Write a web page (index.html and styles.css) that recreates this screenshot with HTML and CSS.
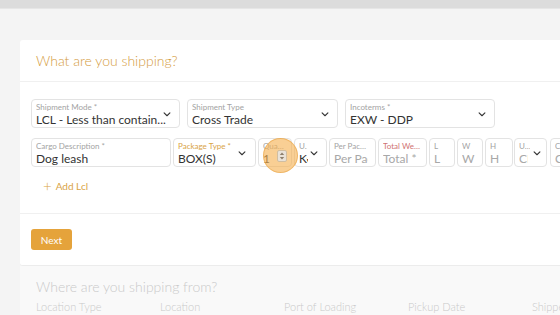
FILE: index.html
```html
<!DOCTYPE html>
<html lang="en">
<head>
<meta charset="utf-8">
<title>New Shipment</title>
<link rel="stylesheet" href="styles.css">
</head>
<body>
<div class="topbar"></div>
<main class="page">
  <section class="card">
    <header class="card-head">What are you shipping?</header>
    <div class="card-body">
      <div class="row row-main">
        <div class="field w-mode">
          <span class="lbl">Shipment Mode *</span>
          <span class="val">LCL - Less than contain...</span>
          <svg class="chev" viewBox="0 0 9 6"><path d="M1 1l3.5 3.5L8 1"/></svg>
        </div>
        <div class="field w-type">
          <span class="lbl">Shipment Type</span>
          <span class="val">Cross Trade</span>
          <svg class="chev" viewBox="0 0 9 6"><path d="M1 1l3.5 3.5L8 1"/></svg>
        </div>
        <div class="field w-inco">
          <span class="lbl">Incoterms *</span>
          <span class="val">EXW - DDP</span>
          <svg class="chev" viewBox="0 0 9 6"><path d="M1 1l3.5 3.5L8 1"/></svg>
        </div>
      </div>
      <div class="row row-items">
        <div class="field w-cargo">
          <span class="lbl">Cargo Description *</span>
          <span class="val">Dog leash</span>
        </div>
        <div class="field w-pkg">
          <span class="lbl lbl-focus">Package Type *</span>
          <span class="val">BOX(S)</span>
          <svg class="chev" viewBox="0 0 9 6"><path d="M1 1l3.5 3.5L8 1"/></svg>
        </div>
        <div class="field w-qty">
          <span class="lbl">Quantity *</span>
          <span class="val">1</span>
          <span class="spin">
            <svg viewBox="0 0 10 12"><rect x="0.5" y="0.5" width="9" height="11" rx="1.5"/><path class="tri" d="M5 2.5l2.2 2.6H2.8zM5 9.5L2.8 6.9h4.4z"/></svg>
          </span>
          <span class="pointer"></span>
        </div>
        <div class="field w-unit">
          <span class="lbl">Unit</span>
          <span class="val">KG</span>
          <svg class="chev" viewBox="0 0 9 6"><path d="M1 1l3.5 3.5L8 1"/></svg>
        </div>
        <div class="field w-per">
          <span class="lbl">Per Package Weight</span>
          <span class="val ph">Per Package</span>
        </div>
        <div class="field w-total">
          <span class="lbl lbl-error">Total Weight *</span>
          <span class="val ph">Total *</span>
        </div>
        <div class="field w-l">
          <span class="lbl">L</span>
          <span class="val ph">L</span>
        </div>
        <div class="field w-w">
          <span class="lbl">W</span>
          <span class="val ph">W</span>
        </div>
        <div class="field w-h">
          <span class="lbl">H</span>
          <span class="val ph">H</span>
        </div>
        <div class="field w-u">
          <span class="lbl">Unit</span>
          <span class="val ph">CM</span>
          <svg class="chev" viewBox="0 0 9 6"><path d="M1 1l3.5 3.5L8 1"/></svg>
        </div>
        <div class="field w-c">
          <span class="lbl">CBM</span>
          <span class="val ph">CBM</span>
        </div>
      </div>
      <button class="add" type="button"><span class="plus">+</span>Add Lcl</button>
    </div>
    <footer class="card-foot">
      <button class="btn" type="button">Next</button>
    </footer>
  </section>

  <section class="card-next">
    <h2 class="next-title">Where are you shipping from?</h2>
    <div class="next-cols">
      <span>Location Type</span>
      <span>Location</span>
      <span>Port of Loading</span>
      <span>Pickup Date</span>
      <span>Shipper</span>
    </div>
  </section>
</main>
</body>
</html>
```

FILE: styles.css
```css
* { box-sizing: border-box; }

html, body {
  margin: 0;
  height: 100%;
  overflow: hidden;
}

body {
  background: #f4f4f4;
  font-family: Lato, "Liberation Sans", sans-serif;
  color: #333;
}

.topbar {
  height: 9px;
  background: #dcdcdc;
  border-bottom: 1px solid #e6e6e6;
}

.page {
  padding: 31px 0 0 20px;
}

/* first step card */
.card {
  background: #fff;
  border-radius: 3px 0 0 3px;
  border-bottom: 1px solid #ececec;
}

.card-head {
  height: 42px;
  display: flex;
  align-items: center;
  padding-left: 16px;
  font-size: 14px;
  font-weight: 300;
  color: #d49b3c;
  border-bottom: 1px solid #f0f0f0;
}

.card-body {
  padding: 17px 0 19px 11px;
  border-bottom: 1px solid #f0f0f0;
  white-space: nowrap;
}

.row {
  display: flex;
}

.row-main { gap: 7px; }

.row-items {
  gap: 2px;
  margin-top: 10px;
}

.field {
  position: relative;
  flex: none;
  height: 29px;
  border: 1px solid #e3e3e3;
  border-radius: 4px;
  padding: 2px 4px 0;
  overflow: hidden;
  display: flex;
  flex-direction: column;
}

.lbl {
  font-size: 8px;
  line-height: 10px;
  color: #a3a3a3;
  overflow: hidden;
  text-overflow: ellipsis;
  white-space: nowrap;
  padding-right: 2px;
}

.lbl-focus { color: #d9a346; }
.lbl-error { color: #d07272; }

.val {
  font-size: 12px;
  line-height: 15px;
  color: #333;
  overflow: hidden;
  white-space: nowrap;
  margin-right: 3px;
}

.val.ph { color: #a8a8a8; }

.chev {
  position: absolute;
  right: 8px;
  top: 12px;
  width: 8px;
  height: 5px;
  fill: none;
  stroke: #333;
  stroke-width: 1.3;
  stroke-linecap: round;
  stroke-linejoin: round;
  background: #fff;
  box-shadow: 0 0 0 3px #fff;
}

.w-mode  { width: 149px; }
.w-type  { width: 151px; }
.w-inco  { width: 150px; }

.w-cargo { width: 140px; }
.w-pkg   { width: 83px; }
.w-qty   { width: 34px; }
.w-unit  { width: 33px; }
.w-per   { width: 47px; }
.w-total { width: 49px; }
.w-l     { width: 26px; }
.w-w     { width: 26px; }
.w-h     { width: 28px; }
.w-u     { width: 33px; margin-left: -1px; }
.w-c     { width: 40px; margin-left: 1px; }

.w-pkg .chev { right: 9px; }
.w-unit .chev { right: 8px; }
.w-u .chev { right: 5px; }

.w-unit .lbl,
.w-u .lbl { max-width: 14px; }

.w-unit .val,
.w-u .val { max-width: 9px; }

/* number stepper inside the quantity box */
.spin {
  position: absolute;
  left: 18px;
  top: 11px;
  width: 10px;
  height: 12px;
  z-index: 2;
}

.spin svg {
  width: 10px;
  height: 12px;
  display: block;
}

.spin rect {
  fill: #e9e2d8;
  stroke: #c9b89c;
  stroke-width: 0.8;
}

.spin .tri { fill: #8d7f6c; }

/* click highlight over the stepper */
.pointer {
  position: absolute;
  left: 4px;
  top: -1px;
  width: 35px;
  height: 35px;
  border-radius: 50%;
  background: rgba(246, 178, 82, 0.62);
  border: 1px solid rgba(232, 160, 60, 0.55);
  z-index: 1;
}

.field.w-qty { overflow: visible; }
.w-qty .lbl { max-width: 26px; }

.add {
  display: flex;
  align-items: center;
  gap: 4px;
  margin: 11px 0 0 12px;
  padding: 0;
  border: 0;
  background: none;
  font: inherit;
  font-size: 10px;
  line-height: 16px;
  color: #d9a346;
}

.plus {
  font-size: 15px;
  line-height: 16px;
  font-weight: 300;
}

.card-foot {
  padding: 15px 0 15px 11px;
}

.btn {
  display: block;
  width: 41px;
  height: 21px;
  border: 0;
  border-radius: 3px;
  background: #e5a33b;
  color: #fff;
  font: inherit;
  font-size: 10px;
  padding: 0;
}

/* next step, not active yet */
.card-next {
  background: #f9f9f9;
  padding: 12px 0 0 16px;
  min-height: 60px;
}

.next-title {
  margin: 0;
  font-size: 14px;
  font-weight: 300;
  line-height: 18px;
  color: #c9c9c9;
}

.next-cols {
  display: grid;
  grid-template-columns: repeat(5, 124px);
  margin-top: 4px;
  font-size: 11px;
  font-weight: 300;
  line-height: 14px;
  color: #c9c9c9;
  white-space: nowrap;
}
```
